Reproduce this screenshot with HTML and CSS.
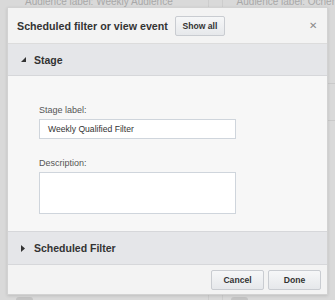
FILE: index.html
```html
<!DOCTYPE html>
<html>
<head>
<meta charset="utf-8">
<link rel="stylesheet" href="styles.css">
</head>
<body>
<div class="page">
  <div class="col col-left">
    <div class="bg-label">Audience label: Weekly Audience</div>
    <div class="bg-pill left-pill"></div>
  </div>
  <div class="col col-mid"></div>
  <div class="col col-right">
    <div class="bg-label">Audience label: Ocher</div>
    <div class="bg-line first">10</div>
    <div class="bg-line">Ev</div>
    <div class="bg-line">e</div>
    <div class="bg-sep"></div>
    <div class="bg-big">ta</div>
    <div class="bg-sep"></div>
    <div class="bg-line">th</div>
    <div class="bg-line">ne</div>
    <div class="bg-line">nf</div>
    <div class="bg-pill right-pill"></div>
  </div>
</div>

<div class="modal">
  <div class="modal-header">
    <span class="modal-title">Scheduled filter or view event</span>
    <button class="btn btn-show">Show all</button>
    <span class="close">&#x2715;</span>
  </div>
  <div class="section-head">
    <svg class="tri" width="5" height="5" viewBox="0 0 5 5"><polygon points="5,0 5,5 0,5" fill="#333"/></svg>
    <span>Stage</span>
  </div>
  <div class="section-body">
    <label class="field-label">Stage label:</label>
    <div class="input">Weekly Qualified Filter</div>
    <label class="field-label desc">Description:</label>
    <div class="textarea"></div>
  </div>
  <div class="section-head collapsed">
    <svg class="tri" width="4" height="7" viewBox="0 0 4 7"><polygon points="0,0 4,3.5 0,7" fill="#333"/></svg>
    <span>Scheduled Filter</span>
  </div>
  <div class="modal-footer">
    <button class="btn">Cancel</button>
    <button class="btn">Done</button>
  </div>
</div>
</body>
</html>
```

FILE: styles.css
```css
* { box-sizing: border-box; }
html, body { margin: 0; padding: 0; }
body {
  width: 335px;
  height: 300px;
  overflow: hidden;
  background: #d9d9d9;
  font-family: "Liberation Sans", Arial, sans-serif;
  position: relative;
}
.page {
  display: flex;
  height: 300px;
}
.col { height: 300px; position: relative; }
.col-left { width: 223px; padding-left: 25px; border-right: 1px solid #cdcdcd; }
.col-mid { width: 15px; border-right: 1px solid #cdcdcd; }
.col-right { flex: 1; padding-left: 90px; color: #8f8f8f; font-size: 10px; }
.bg-label { font-size: 10px; color: #a8a8a8; margin-top: -4px; white-space: nowrap; }
.col-right .bg-label { margin-left: -76px; }
.col-right .bg-line { height: 12px; line-height: 12px; }
.col-right .bg-line.first { margin-top: 26px; }
.bg-sep { height: 1px; background: #c9c9c9; margin: 14px 0 8px -90px; }
.bg-big { font-size: 17px; color: #7f7f7f; height: 22px; }
.bg-big + .bg-sep { margin-top: 6px; margin-bottom: 4px; }
.bg-pill {
  position: absolute;
  bottom: -6px;
  width: 17px;
  height: 9px;
  border-radius: 3px;
  background: #c4c4c4;
}
.left-pill { left: 16px; }
.right-pill { left: 8px; }

.modal {
  position: absolute;
  left: 7px;
  top: 7px;
  width: 321px;
  height: 288px;
  background: #f7f7f7;
  border: 1px solid #d2d2d2;
  box-shadow: 0 1px 3px rgba(0,0,0,0.12);
  display: flex;
  flex-direction: column;
}
.modal-header {
  height: 36px;
  background: #f3f3f3;
  border-bottom: 1px solid #dcdcdc;
  display: flex;
  align-items: center;
  padding: 0 0 0 9px;
}
.modal-title {
  font-weight: bold;
  font-size: 10.7px;
  color: #333;
}
.btn {
  font-family: "Liberation Sans", Arial, sans-serif;
  font-weight: bold;
  font-size: 8.6px;
  color: #333;
  background: linear-gradient(#f6f7f8, #e6e8eb);
  border: 1px solid #c9ccd1;
  border-radius: 2px;
  height: 20px;
  padding: 0;
  width: 53px;
}
.btn-show { margin-left: 7px; width: 50px; }
.close {
  margin-left: auto;
  margin-right: 10px;
  font-size: 10px;
  color: #8a8a8a;
}
.section-head {
  height: 32px;
  background: #e5e6e9;
  border-bottom: 1px solid #d6d7da;
  display: flex;
  align-items: center;
  padding-left: 13px;
  font-weight: bold;
  font-size: 10.5px;
  color: #333;
}
.section-head .tri { margin-right: 8px; }
.section-head.collapsed { border-top: 1px solid #d6d7da; height: 34px; }
.section-head.collapsed .tri { margin-right: 9px; }
.section-body {
  flex: 1;
  padding: 29px 0 0 31px;
  display: flex;
  flex-direction: column;
  background: #f7f7f7;
}
.field-label {
  font-size: 9px;
  color: #555;
  margin-bottom: 4px;
}
.field-label.desc { margin-top: 19px; }
.input, .textarea {
  width: 197px;
  background: #fff;
  border: 1px solid #cfd5dc;
}
.input {
  height: 20px;
  font-size: 8.6px;
  color: #333;
  padding: 4px 0 0 8px;
}
.textarea { height: 42px; }
.modal-footer {
  height: 29px;
  background: #f3f3f3;
  display: flex;
  justify-content: flex-end;
  align-items: center;
  gap: 4px;
  padding-right: 6px;
}
```
